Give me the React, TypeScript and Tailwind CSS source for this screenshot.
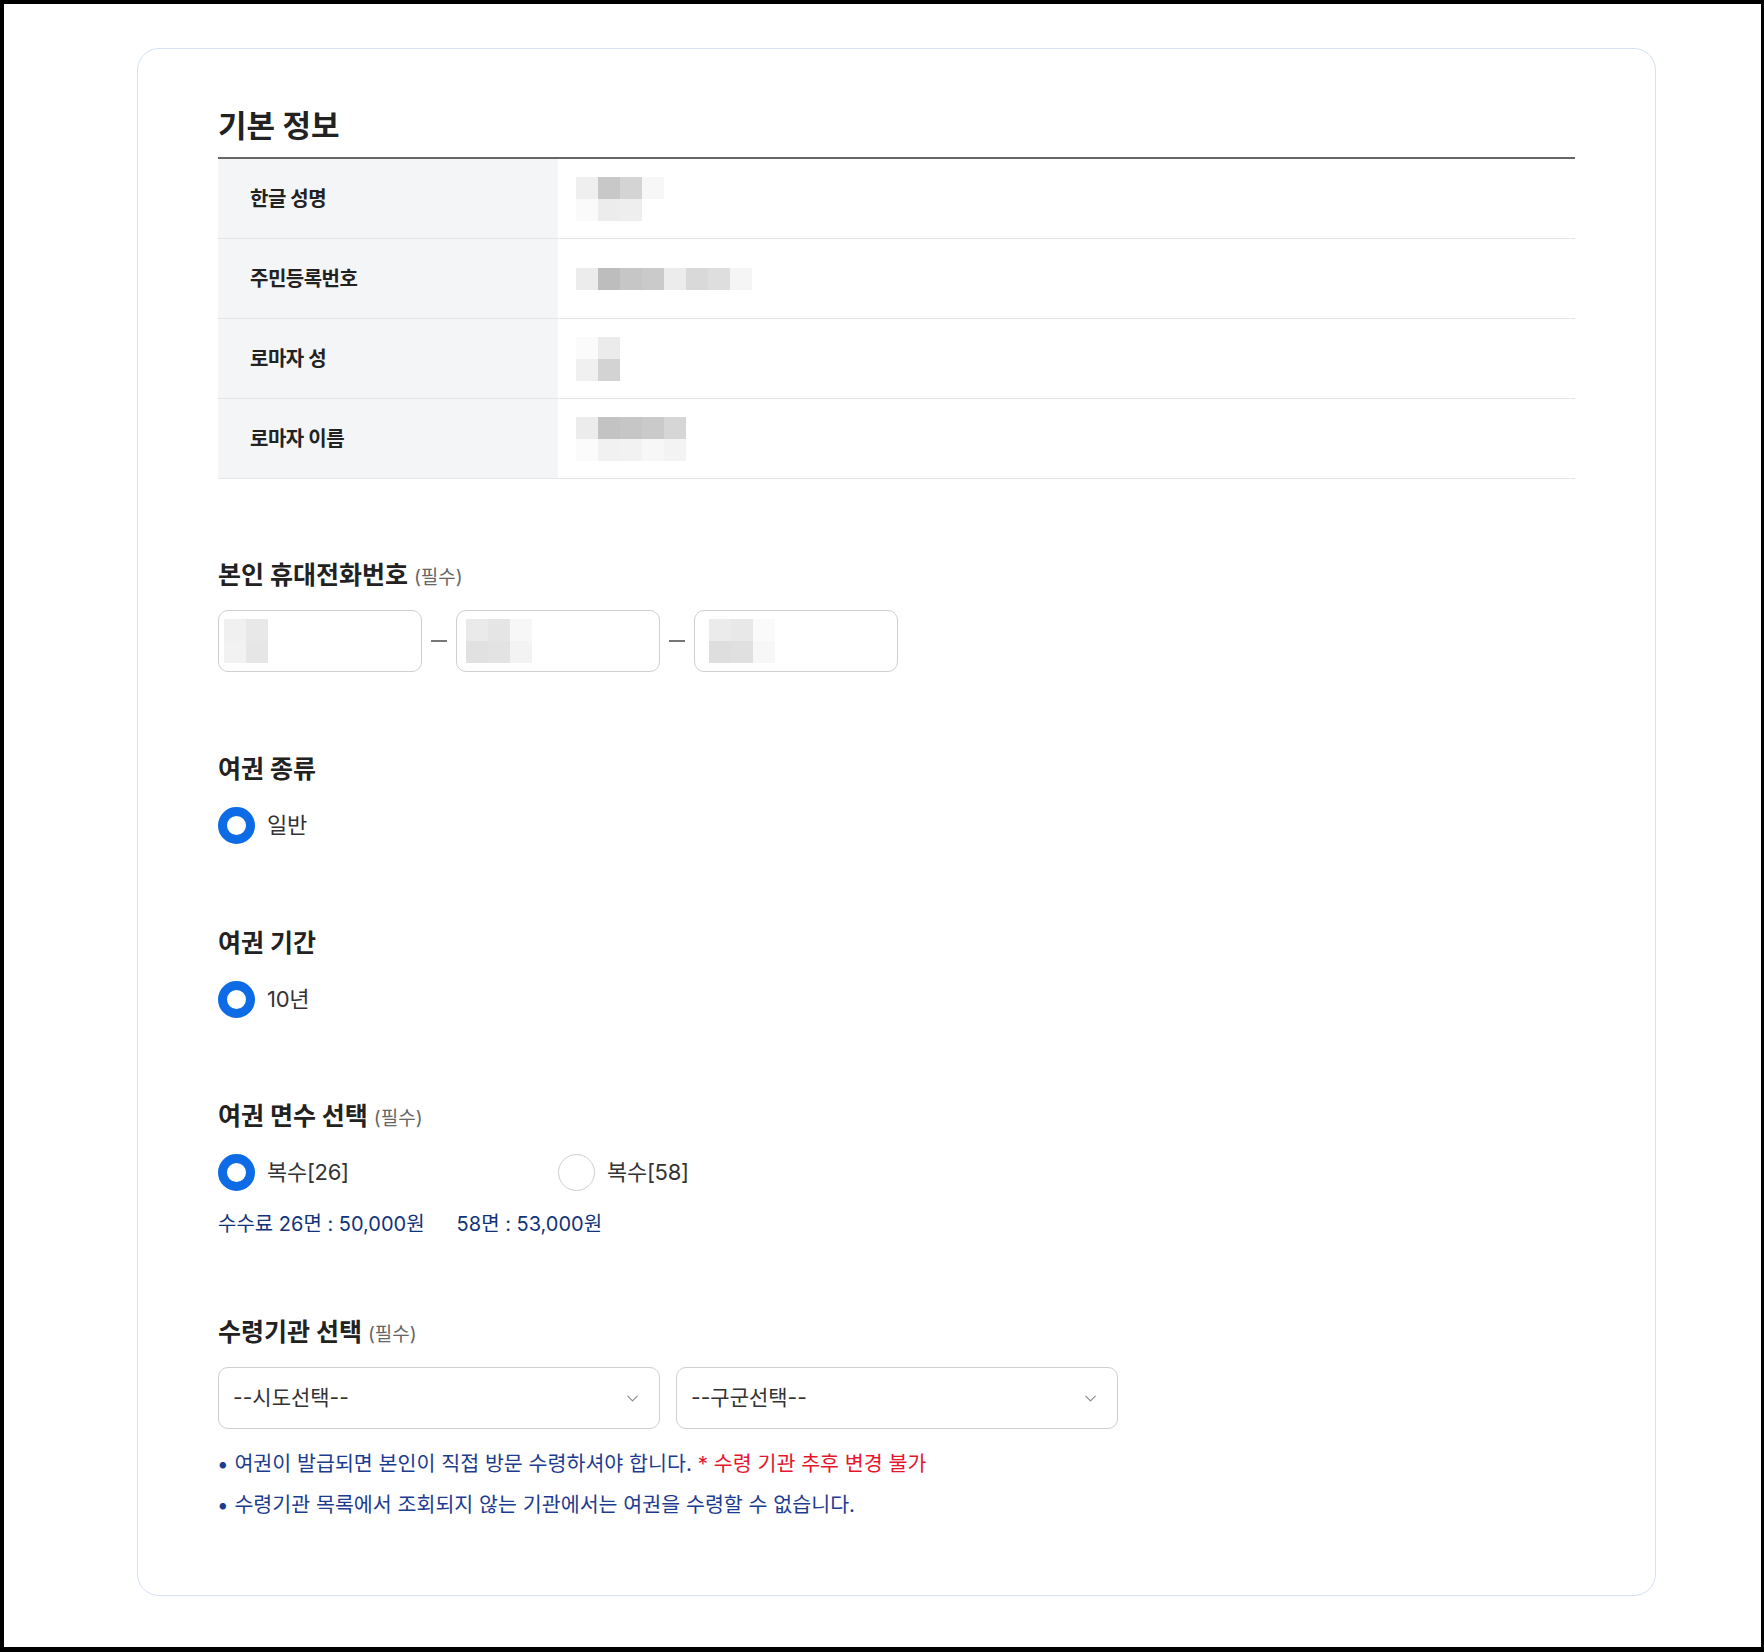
import React from 'react';
import { ChevronDown } from 'lucide-react';

// blurred (mosaic) personal data, one class per cell
const nameCells = [
  ['bg-[#efefef]', 'bg-[#c8c8c8]', 'bg-[#d4d4d4]', 'bg-[#f7f7f7]'],
  ['bg-[#fafafa]', 'bg-[#ececec]', 'bg-[#eeeeee]', 'bg-white'],
];
const rrnCells = [
  ['bg-[#ececec]', 'bg-[#bdbdbd]', 'bg-[#c6c6c6]', 'bg-[#cacaca]', 'bg-[#ececec]', 'bg-[#d9d9d9]', 'bg-[#dedede]', 'bg-[#f5f5f5]'],
];
const lastCells = [
  ['bg-[#fbfbfb]', 'bg-[#ebebeb]'],
  ['bg-[#f0f0f0]', 'bg-[#d3d3d3]'],
];
const firstCells = [
  ['bg-[#ececec]', 'bg-[#c3c3c3]', 'bg-[#c6c6c6]', 'bg-[#cacaca]', 'bg-[#d6d6d6]'],
  ['bg-[#fbfbfb]', 'bg-[#f1f1f1]', 'bg-[#f2f2f2]', 'bg-[#f7f7f7]', 'bg-[#f3f3f3]'],
];
const phone1 = [
  ['bg-[#f0f0f0]', 'bg-[#e8e8e8]'],
  ['bg-[#f2f2f2]', 'bg-[#e6e6e6]'],
];
const phone2 = [
  ['bg-[#eaeaea]', 'bg-[#e5e5e5]', 'bg-[#f7f7f7]'],
  ['bg-[#e1e1e1]', 'bg-[#e3e3e3]', 'bg-[#f3f3f3]'],
];
const phone3 = [
  ['bg-[#ebebeb]', 'bg-[#e8e8e8]', 'bg-[#fafafa]'],
  ['bg-[#dedede]', 'bg-[#e0e0e0]', 'bg-[#f7f7f7]'],
];

function Mosaic({ cells }: { cells: string[][] }) {
  return (
    <div className="flex flex-col">
      {cells.map((row, i) => (
        <div key={i} className="flex">
          {row.map((c, j) => (
            <div key={j} className={`w-[22px] h-[22px] ${c}`} />
          ))}
        </div>
      ))}
    </div>
  );
}

function InfoRow({ label, cells }: { label: string; cells: string[][] }) {
  return (
    <div className="flex h-[80px] border-b border-[#e3e5e8]">
      <div className="w-[340px] bg-[#f4f5f7] pl-[32px] flex items-center text-[20px] font-semibold tracking-[-0.5px] text-[#222]">
        {label}
      </div>
      <div className="flex-1 pl-[18px] flex items-center">
        <Mosaic cells={cells} />
      </div>
    </div>
  );
}

function SectionTitle({ title, required }: { title: string; required?: boolean }) {
  return (
    <div className="flex items-baseline gap-[6px] h-[32px] leading-[32px]">
      <h3 className="text-[25px] font-bold text-[#222]">{title}</h3>
      {required && <span className="text-[19px] text-[#666]">(필수)</span>}
    </div>
  );
}

function Radio({ label, checked }: { label: string; checked?: boolean }) {
  return (
    <div className="flex items-center h-[40px] gap-[12px]">
      {checked ? (
        <span className="w-[37px] h-[37px] rounded-full border-[9px] border-[#0d6be6] bg-white" />
      ) : (
        <span className="w-[37px] h-[37px] rounded-full border border-[#cfcfcf] bg-white" />
      )}
      <span className="text-[22px] text-[#333] tracking-[-0.3px]">{label}</span>
    </div>
  );
}

function PhoneBox({ cells, pad }: { cells: string[][]; pad: string }) {
  return (
    <div className={`w-[204px] h-[62px] border border-[#cfcfcf] rounded-[10px] bg-white flex items-center ${pad}`}>
      <Mosaic cells={cells} />
    </div>
  );
}

function SelectBox({ label }: { label: string }) {
  return (
    <div className="w-[442px] h-[62px] border border-[#cfcfcf] rounded-[10px] bg-white flex items-center justify-between pl-[14px] pr-[17px]">
      <span className="text-[21px] text-[#333]">{label}</span>
      <ChevronDown size={19} strokeWidth={1.4} className="text-[#888]" />
    </div>
  );
}

export default function App() {
  return (
    <div className="bg-black pt-[4px] pl-[4px] pr-[3px] pb-[5px] font-['Inter','Noto_Sans_CJK_KR',sans-serif]">
      <div className="bg-white h-[1643px] pt-[44px] pl-[133px]">
        <div className="w-[1519px] h-[1548px] border border-[#d5e0f4] rounded-[22px] px-[80px] pt-[59px]">
          {/* 기본 정보 */}
          <h2 className="text-[31px] leading-[36px] font-bold text-[#222]">기본 정보</h2>
          <div className="mt-[13px] border-t-2 border-[#666]">
            <InfoRow label="한글 성명" cells={nameCells} />
            <InfoRow label="주민등록번호" cells={rrnCells} />
            <InfoRow label="로마자 성" cells={lastCells} />
            <InfoRow label="로마자 이름" cells={firstCells} />
          </div>

          {/* 휴대전화 */}
          <div className="mt-[80px]">
            <SectionTitle title="본인 휴대전화번호" required />
            <div className="mt-[19px] flex items-center">
              <PhoneBox cells={phone1} pad="pl-[5px]" />
              <span className="w-[16px] h-[2px] bg-[#777] mx-[9px]" />
              <PhoneBox cells={phone2} pad="pl-[9px]" />
              <span className="w-[16px] h-[2px] bg-[#777] mx-[9px]" />
              <PhoneBox cells={phone3} pad="pl-[14px]" />
            </div>
          </div>

          {/* 여권 종류 */}
          <div className="mt-[81px]">
            <SectionTitle title="여권 종류" />
            <div className="mt-[20px]">
              <Radio label="일반" checked />
            </div>
          </div>

          {/* 여권 기간 */}
          <div className="mt-[82px]">
            <SectionTitle title="여권 기간" />
            <div className="mt-[20px]">
              <Radio label="10년" checked />
            </div>
          </div>

          {/* 여권 면수 */}
          <div className="mt-[81px]">
            <SectionTitle title="여권 면수 선택" required />
            <div className="mt-[20px] flex">
              <div className="w-[340px]">
                <Radio label="복수[26]" checked />
              </div>
              <Radio label="복수[58]" />
            </div>
            <p className="mt-[18px] text-[20px] leading-[28px] text-[#12337a] flex gap-[32px]">
              <span>수수료 26면 : 50,000원</span>
              <span>58면 : 53,000원</span>
            </p>
          </div>

          {/* 수령기관 */}
          <div className="mt-[78px]">
            <SectionTitle title="수령기관 선택" required />
            <div className="mt-[19px] flex gap-[16px]">
              <SelectBox label="--시도선택--" />
              <SelectBox label="--구군선택--" />
            </div>
            <ul className="mt-[21px] text-[20.6px] leading-[28px] text-[#1d3c8f]">
              <li className="-ml-[1px]">
                • 여권이 발급되면 본인이 직접 방문 수령하셔야 합니다.{' '}
                <span className="text-[#e5162c]">* 수령 기관 추후 변경 불가</span>
              </li>
              <li className="-ml-[1px] mt-[13px]">• 수령기관 목록에서 조회되지 않는 기관에서는 여권을 수령할 수 없습니다.</li>
            </ul>
          </div>
        </div>
      </div>
    </div>
  );
}
